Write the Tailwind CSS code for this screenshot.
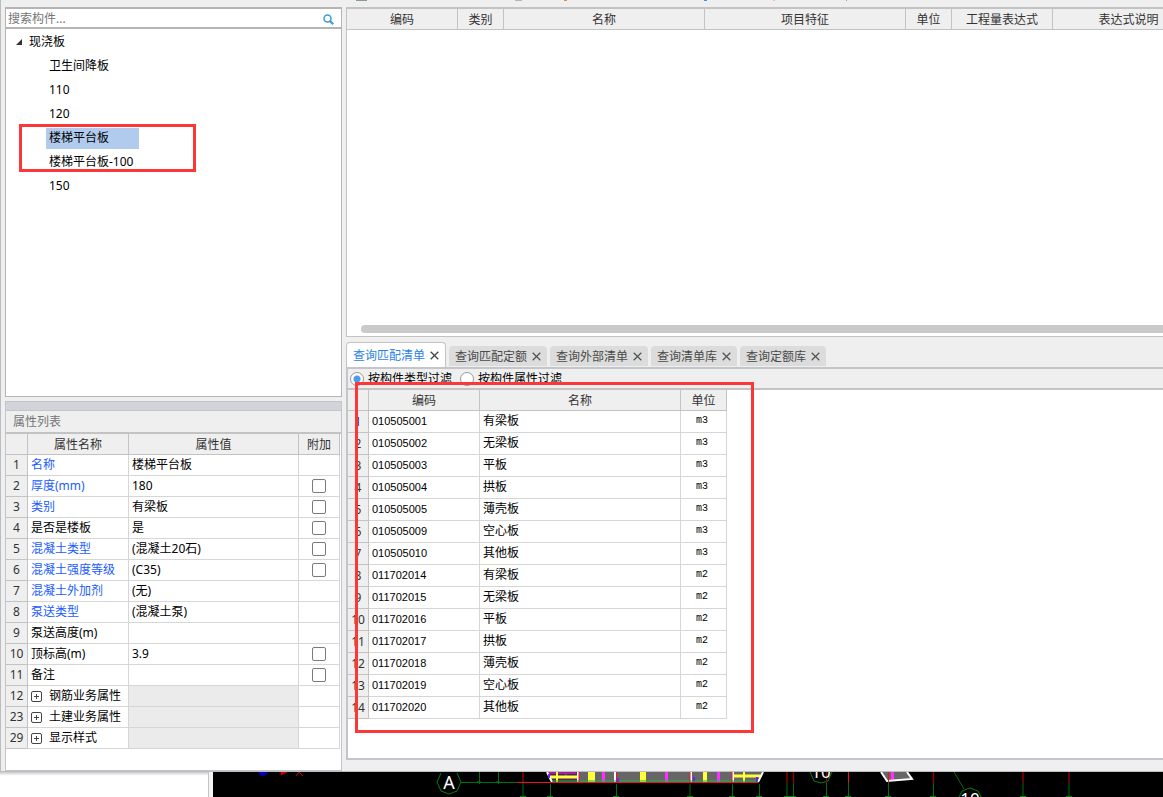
<!DOCTYPE html>
<html lang="zh-CN">
<head>
<meta charset="utf-8">
<title>构件列表</title>
<script src="https://cdn.jsdelivr.net/npm/@tailwindcss/browser@4"></script>
</head>
<body class="h-screen flex flex-col overflow-hidden bg-[#efefef] text-black text-[12px] leading-4 font-['Noto_Sans','Noto_Sans_CJK_SC',sans-serif]">

<main class="flex-1 min-h-0 flex gap-1 border-l border-b border-[#b9bcc0]">

  <!-- Left column: component tree and properties -->
  <aside class="w-[341px] shrink-0 flex flex-col pl-1">
    <div class="h-[7px] shrink-0"></div>
    <label class="flex items-center h-[22px] shrink-0 bg-white border border-t-2 border-b-2 border-[#b4b4b4] pl-0.5 pr-[7px] pt-0.5">
      <input type="text" aria-label="搜索构件" placeholder="搜索构件..." class="flex-1 min-w-0 outline-none bg-transparent placeholder:text-[#757575]">
      <svg class="size-[11px]" viewBox="0 0 11 11" fill="none" stroke="#3d9bd0"><circle cx="4.5" cy="4.5" r="3.5" stroke-width="1.5"/><path d="M7 7l3.2 3.2" stroke-width="2.2"/></svg>
    </label>
    <div class="flex-1 min-h-0 bg-white border border-t-0 border-[#b4b4b4] relative">
      <ul class="pt-px">
        <li>
          <div class="flex items-center h-6 pl-[10px] gap-[7px]">
            <svg class="size-[6px]" viewBox="0 0 6 6"><path d="M6 0v6H0z" fill="#333"/></svg>
            <span>现浇板</span>
          </div>
          <ul id="tree" class="pl-10"></ul>
        </li>
      </ul>
      <div class="absolute left-[13px] top-[95px] w-[177px] h-12 border-3 border-[#fb3737]"></div>
    </div>

    <div class="h-1 shrink-0"></div>
    <section class="shrink-0 h-[370px] flex flex-col border border-[#c3c5ca] bg-white">
      <div class="h-[9px] bg-[#d2d4da] border-b border-[#c3c5ca] shrink-0"></div>
      <h2 class="h-[23px] shrink-0 bg-[#efefef] border-b-2 border-[#c3c3c3] px-[7px] pt-[3px] text-[#757575]">属性列表</h2>
      <table class="w-[334px] table-fixed border-separate border-spacing-0">
        <colgroup><col class="w-[22px]"><col class="w-[101px]"><col class="w-[170px]"><col class="w-[41px]"></colgroup>
        <thead>
          <tr class="h-[21px] bg-[#efefef] text-[#333] [&>th]:p-0 [&>th]:pt-px [&>th]:font-normal [&>th]:border-r [&>th]:border-b [&>th]:border-[#c3c3c3]">
            <th></th><th>属性名称</th><th>属性值</th><th>附加</th>
          </tr>
        </thead>
        <tbody id="props"></tbody>
      </table>
    </section>
  </aside>

  <!-- Right column: bill items and query tabs -->
  <div class="flex-1 min-w-0 flex flex-col">
    <div class="h-[7px] shrink-0 overflow-hidden">
      <svg class="w-full h-px" aria-hidden="true"><path d="M10 .5h11" stroke="#8a979f"/><path d="M169 .5h7" stroke="#b5b5b5"/><path d="M218 .5h3M500 .5h1" stroke="#ee8a3a"/><path d="M358 .5h3" stroke="#4a90d9"/><path d="M427 .5h2" stroke="#f5c0a8"/></svg>
    </div>
    <section class="flex-1 min-h-0 flex flex-col justify-between overflow-hidden bg-white border-l border-b border-t-2 border-[#c3c3c3]">
      <table class="w-[858px] table-fixed border-separate border-spacing-0">
        <colgroup><col class="w-[111px]"><col class="w-[46px]"><col class="w-[201px]"><col class="w-[201px]"><col class="w-[46px]"><col class="w-[101px]"><col class="w-[152px]"></colgroup>
        <thead>
          <tr class="h-[21px] bg-[#efefef] text-[#333] [&>th]:p-0 [&>th]:pt-px [&>th]:font-normal [&>th]:border-r [&>th]:border-b [&>th]:border-[#c3c3c3]">
            <th>编码</th><th>类别</th><th>名称</th><th>项目特征</th><th>单位</th><th>工程量表达式</th><th>表达式说明</th>
          </tr>
        </thead>
      </table>
      <div class="ml-[14px] h-2 mb-[3px] rounded-l-full bg-[#cacaca]"></div>
    </section>

    <div role="tablist" class="shrink-0 flex items-end gap-[3px] h-[30px] text-[#4a4a4a]">
      <button role="tab" aria-selected="true" class="flex items-center gap-[5px] h-[25px] px-1.5 pt-px bg-white border border-b-0 border-[#c3c3c3] rounded-t text-[#2b83e6]">查询匹配清单<svg class="size-[9px]" viewBox="0 0 9 9" stroke="#444" stroke-width="1.3"><path d="M.7.7l7.6 7.6M8.3.7L.7 8.3"/></svg></button>
      <button role="tab" class="flex items-center gap-[5px] h-5 mb-px px-1.5 pt-px bg-[#dcdcdc] rounded-t">查询匹配定额<svg class="size-[9px]" viewBox="0 0 9 9" stroke="#555" stroke-width="1.3"><path d="M.7.7l7.6 7.6M8.3.7L.7 8.3"/></svg></button>
      <button role="tab" class="flex items-center gap-[5px] h-5 mb-px px-1.5 pt-px bg-[#dcdcdc] rounded-t">查询外部清单<svg class="size-[9px]" viewBox="0 0 9 9" stroke="#555" stroke-width="1.3"><path d="M.7.7l7.6 7.6M8.3.7L.7 8.3"/></svg></button>
      <button role="tab" class="flex items-center gap-[5px] h-5 mb-px px-1.5 pt-px bg-[#dcdcdc] rounded-t">查询清单库<svg class="size-[9px]" viewBox="0 0 9 9" stroke="#555" stroke-width="1.3"><path d="M.7.7l7.6 7.6M8.3.7L.7 8.3"/></svg></button>
      <button role="tab" class="flex items-center gap-[5px] h-5 mb-px px-1.5 pt-px bg-[#dcdcdc] rounded-t">查询定额库<svg class="size-[9px]" viewBox="0 0 9 9" stroke="#555" stroke-width="1.3"><path d="M.7.7l7.6 7.6M8.3.7L.7 8.3"/></svg></button>
    </div>

    <section class="relative shrink-0 h-[393px] flex flex-col bg-white border-l-2 border-t-2 border-b-2 border-[#c3c5ca]">
      <div class="shrink-0 flex items-center gap-2 h-[21px] bg-[#efefef] border-b-2 border-[#c3c3c3] pl-[2px]">
        <label class="flex items-center gap-1"><input type="radio" name="filter" checked class="appearance-none size-[14px] rounded-full border border-[#999] bg-white bg-[radial-gradient(circle,#4a9bf5_3px,transparent_4px)]">按构件类型过滤</label>
        <label class="flex items-center gap-1"><input type="radio" name="filter" class="appearance-none size-[14px] rounded-full border border-[#999] bg-white">按构件属性过滤</label>
      </div>
      <table class="w-[379px] table-fixed border-separate border-spacing-0">
        <colgroup><col class="w-[21px]"><col class="w-[111px]"><col class="w-[201px]"><col class="w-[46px]"></colgroup>
        <thead>
          <tr class="h-[21px] bg-[#efefef] text-[#333] [&>th]:p-0 [&>th]:pt-px [&>th]:font-normal [&>th]:border-r [&>th]:border-b [&>th]:border-[#c3c3c3]">
            <th></th><th>编码</th><th>名称</th><th>单位</th>
          </tr>
        </thead>
        <tbody id="items"></tbody>
      </table>
      <div class="absolute left-[7px] top-[13px] w-[399px] h-[351px] border-3 border-[#fb3737]"></div>
    </section>
    <div class="h-[11px] shrink-0"></div>
  </div>
</main>

<!-- Drawing canvas showing below the panel -->
<footer class="h-[25px] shrink-0 flex bg-white">
  <div class="w-[209px] shrink-0 border-r border-[#c3c3c3] bg-linear-to-b from-[#c8c8c8] to-white to-15%"></div>
  <div class="w-1 shrink-0 bg-[#f4f4f4]"></div>
  <div class="flex-1 min-w-0 bg-black overflow-hidden">
    <svg width="950" height="25" viewBox="213 772 950 25" fill="none">
      <path d="M258 772h10q-2 4-5 4t-5-4z" fill="#0000b4"/>
      <path d="M281 772h6l-6 3z" fill="#b00" stroke="#c00" stroke-width=".8"/>
      <path d="M296 776l3-4 4 4" stroke="#c00"/>
      <path d="M479.500 772v12M498.500 772v12M461 782.500H520M550.500 784v13M616.500 784v13M690 784v13M732.500 784v13M759.500 784v13" stroke="#00700a"/>
      <path d="M523 783v14M787 783v14M793.500 783v14M826.500 783v14M848.500 783v14M888.500 783v14M933.500 783v14M1023 783v14M1069 783v14" stroke="#00700a"/>
      <path d="M477 782h4M496 782h4M520 796.500h6M547 796.500h6M613 796.500h6M687 796.500h6M729 796.500h6M756 796.500h6M784 796.500h12M823 796.500h6M845 796.500h6M885 796.500h6M930 796.500h6M1020 796.500h6M1066 796.500h6" stroke="#008010"/>
      <path d="M523 772v11M787 772v11M793.500 772v11M933.500 772v11M1023 772v11M1069 772v11" stroke="#8c0000" stroke-width="1.500"/>
      <path d="M548 772h214l-6 10H552z" fill="#666"/>
      <path d="M548 772h30v10h-26z" fill="#4a2a4a"/>
      <path d="M548 773h28M566 772v5" stroke="#a020a0" stroke-width="2"/>
      <path d="M549 777h29M733 776h28" stroke="#ffff3a" stroke-width="3"/>
      <path d="M557 772v10M744 772v10" stroke="#ffff3a" stroke-width="2"/>
      <path d="M588 772h7v10h-7zM640 772h6v10h-6zM703 772h4v10h-4z" fill="#ffff3a"/>
      <path d="M602 772h3v10h-3zM665 772h3v10h-3zM717 772h3v10h-3z" fill="#ff30ff"/>
      <path d="M547 772l5 10M578 772v10M615 772v10M691 772v10M733 772v10M763 772l-5 10" stroke="#fff" stroke-width="2"/>
      <path d="M552 781h206" stroke="#1eb43c"/>
      <path d="M618 778v4M694 777v4M757 777v4M549 774v4" stroke="#7020ff" stroke-width="2"/>
      <path d="M517 782.500H758M579 772v10M616.500 772v10M690 772v10M732 772v10M848.500 772v11" stroke="#f01020"/>
      <path d="M881 772l6 9 25-2-5-7z" fill="#666"/>
      <path d="M891 772h3v8h-3z" fill="#ff30ff"/>
      <path d="M881 772l6 9 25-2-5-7" stroke="#fff" stroke-width="2"/>
      <path d="M888.500 772v11" stroke="#f01020"/>
      <path d="M954 772l10 17" stroke="#00700a"/>
      <path d="M441 773l-4 9 4 9 8 3 8-3 4-9-4-9M810 772l4 9 7 2 7-2 4-9M959 797l3-6 8-3 8 3 3 6" stroke="#008010"/>
      <path d="M826.500 772v11" stroke="#a00000"/>
      <g fill="#fff" text-anchor="middle" font-family="Noto Sans, sans-serif">
        <text x="449" y="789" font-size="18">A</text>
        <text x="821" y="778" font-size="17">10</text>
        <text x="970" y="805" font-size="17">10</text>
      </g>
    </svg>
  </div>
</footer>

<script>
const leaves = ['卫生间降板', '110', '120', '楼梯平台板', '楼梯平台板-100', '150'];
document.getElementById('tree').innerHTML = leaves.map((t, i) =>
  `<li class="h-6 flex items-center"><span class="${i === 3 ? 'bg-[#b1cbee] w-[93px]' : ''} h-[21px] flex items-center px-[3px]">${t}</span></li>`).join('');

// [row number, name, value, has check box, kind: blue = key property, group = collapsed group]
const props = [
  [1, '名称', '楼梯平台板', 0, 'blue'], [2, '厚度(mm)', '180', 1, 'blue'], [3, '类别', '有梁板', 1, 'blue'],
  [4, '是否是楼板', '是', 1, ''], [5, '混凝土类型', '(混凝土20石)', 1, 'blue'], [6, '混凝土强度等级', '(C35)', 1, 'blue'],
  [7, '混凝土外加剂', '(无)', 0, 'blue'], [8, '泵送类型', '(混凝土泵)', 0, 'blue'], [9, '泵送高度(m)', '', 0, ''],
  [10, '顶标高(m)', '3.9', 1, ''], [11, '备注', '', 1, ''],
  [12, '钢筋业务属性', '', 0, 'group'], [23, '土建业务属性', '', 0, 'group'], [29, '显示样式', '', 0, 'group']
];
const plus = '<button aria-label="展开" class="mr-[7px]"><svg class="block size-[11px]" viewBox="0 0 11 11" fill="none" stroke="#444"><rect x=".5" y=".5" width="10" height="10" rx="1.500"/><path d="M3 5.500h5M5.500 3v5"/></svg></button>';
document.getElementById('props').innerHTML = props.map(([n, name, val, box, kind]) => `
  <tr class="h-[21px]">
    <td class="p-0 text-center bg-[#efefef] text-[#333] border-r border-b border-[#c3c3c3]">${n}</td>
    <td class="p-0 pl-[3px] border-r border-b border-[#d6d6d6] ${kind === 'blue' ? 'text-[#1a5cff]' : ''}"><div class="flex items-center whitespace-nowrap">${kind === 'group' ? plus : ''}${name}</div></td>
    <td class="p-0 pl-[3px] border-r border-b border-[#d6d6d6] ${kind === 'group' ? 'bg-[#ebebeb]' : ''}">${val}</td>
    <td class="p-0 border-r border-b border-[#d6d6d6]">${box ? `<input type="checkbox" aria-label="附加 ${name}" class="appearance-none block mx-auto size-[14px] rounded-[2px] border border-[#7a7a7a] bg-white">` : ''}</td>
  </tr>`).join('');

const names = ['有梁板', '无梁板', '平板', '拱板', '薄壳板', '空心板', '其他板'];
const codes = ['010505001', '010505002', '010505003', '010505004', '010505005', '010505009', '010505010',
  '011702014', '011702015', '011702016', '011702017', '011702018', '011702019', '011702020'];
document.getElementById('items').innerHTML = codes.map((c, i) => `
  <tr class="h-[22px]">
    <td class="p-0 pt-px text-center bg-[#efefef] text-[#333] border-r border-b border-[#c3c3c3]">${i + 1}</td>
    <td class="p-0 pl-[3px] pb-[2px] border-r border-b border-[#d6d6d6] text-[11px] font-['Liberation_Sans',sans-serif]">${c}</td>
    <td class="p-0 pl-[3px] pb-[2px] border-r border-b border-[#d6d6d6]">${names[i % 7]}</td>
    <td class="p-0 pb-px pr-[3px] text-center border-r border-b border-[#d6d6d6] text-[10px] font-['Liberation_Mono',monospace]">${i < 7 ? 'm3' : 'm2'}</td>
  </tr>`).join('');
</script>
</body>
</html>
